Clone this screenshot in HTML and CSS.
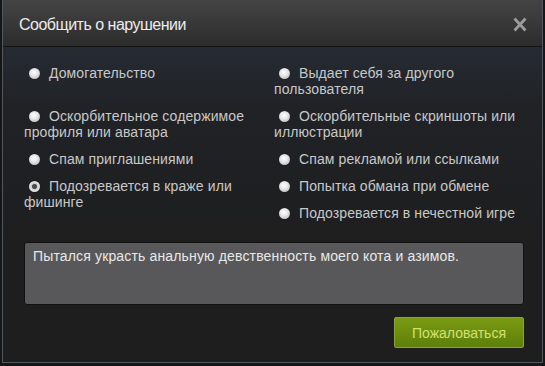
FILE: index.html
```html
<!DOCTYPE html>
<html lang="ru">
<head>
<meta charset="utf-8">
<link rel="stylesheet" href="styles.css">
</head>
<body>
<div class="dialog">
  <div class="header">
    <span class="title">Сообщить о нарушении</span>
    <svg class="close" width="14" height="15" viewBox="0 0 14 15"><path d="M1.5 1.5 L12.5 13.5 M12.5 1.5 L1.5 13.5" stroke="#9c9c9c" stroke-width="2.8" stroke-linecap="butt"/></svg>
  </div>
  <div class="body">
    <div class="options">
      <div class="col">
        <label class="opt tall"><span class="radio"></span>Домогательство</label>
        <label class="opt"><span class="radio"></span>Оскорбительное содержимое профиля или аватара</label>
        <label class="opt"><span class="radio"></span>Спам приглашениями</label>
        <label class="opt"><span class="radio checked"></span>Подозревается в краже или фишинге</label>
      </div>
      <div class="col">
        <label class="opt"><span class="radio"></span>Выдает себя за другого пользователя</label>
        <label class="opt"><span class="radio"></span>Оскорбительные скриншоты или иллюстрации</label>
        <label class="opt"><span class="radio"></span>Спам рекламой или ссылками</label>
        <label class="opt"><span class="radio"></span>Попытка обмана при обмене</label>
        <label class="opt"><span class="radio"></span>Подозревается в нечестной игре</label>
      </div>
    </div>
    <div class="textbox">Пытался украсть анальную девственность моего кота и азимов.</div>
    <div class="actions">
      <button class="btn">Пожаловаться</button>
    </div>
  </div>
</div>
</body>
</html>
```

FILE: styles.css
```css
html, body {
  margin: 0;
  padding: 0;
  background: #151617;
  font-family: "Liberation Sans", Arial, sans-serif;
}
.dialog {
  margin-left: 2px;
  width: 539px;
  height: 362px;
  border: 1px solid #54585c;
  border-top: none;
  display: flex;
  flex-direction: column;
  background: #1f1f20;
}
.header {
  height: 29px;
  padding: 17px 15px 0 16px;
  border-bottom: 1px solid #141414;
  background: linear-gradient(#444444, #2c2c2c);
  display: flex;
  align-items: flex-start;
  justify-content: space-between;
  flex-shrink: 0;
}
.title {
  color: #ececec;
  font-size: 16px;
  line-height: 16px;
  letter-spacing: -0.5px;
}
.body {
  flex: 1;
  background: linear-gradient(#262b33 0px, #202226 60px, #1e1e1f 200px);
  padding: 18px 0 0 21px;
  display: flex;
  flex-direction: column;
}
.options {
  display: flex;
}
.col {
  width: 250px;
  display: flex;
  flex-direction: column;
}
.opt {
  display: block;
  color: #c8c8c8;
  font-size: 14px;
  line-height: 16px;
  letter-spacing: 0.1px;
  margin-bottom: 11px;
}
.opt.tall {
  min-height: 32px;
}
.radio {
  display: inline-block;
  width: 11px;
  height: 11px;
  border-radius: 50%;
  margin: 0 9px 0 5px;
  vertical-align: -1px;
  background: radial-gradient(circle at 45% 40%, #ffffff 0%, #e6e6e6 40%, #a8a8a8 100%);
  box-shadow: 0 0 1px rgba(0,0,0,0.6);
}
.radio.checked {
  background: radial-gradient(circle, #3e3e3e 0%, #555 28%, #c8c8c8 38%, #e6e6e6 60%, #a8a8a8 100%);
}
.textbox {
  margin-top: 10px;
  height: 56px;
  width: 490px;
  background: #58585a;
  border: 1px solid #111;
  border-radius: 3px;
  color: #e8e8e8;
  font-size: 14px;
  line-height: 16px;
  letter-spacing: 0.15px;
  padding: 5px 0 0 8px;
}
.actions {
  display: flex;
  justify-content: flex-end;
  margin-top: 12px;
  width: 500px;
}
.btn {
  width: 130px;
  height: 31px;
  border: 1px solid #8aa52a;
  border-radius: 2px;
  background: linear-gradient(#7a9b12, #5e7f0a);
  color: #cfe36e;
  font-family: "Liberation Sans", Arial, sans-serif;
  font-size: 14px;
  padding: 0;
}
```
